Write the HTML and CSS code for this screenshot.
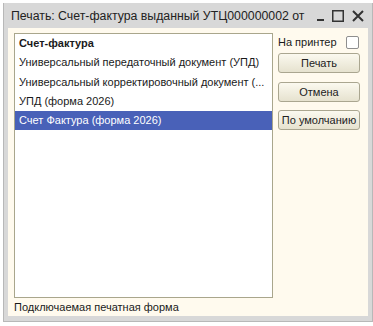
FILE: index.html
```html
<!DOCTYPE html>
<html lang="ru">
<head>
    <meta charset="UTF-8">
    <title>Печать</title>
    <link rel="stylesheet" href="styles.css">
</head>
<body>
    <div class="window">
        <div class="titlebar">
            <span class="title">Печать: Счет-фактура выданный УТЦ000000002 от</span>
            <span class="win-min"></span>
            <svg class="win-btn" width="12" height="12" viewBox="0 0 12 12"><rect x="0.75" y="0.75" width="10.5" height="10.5" fill="none" stroke="#333" stroke-width="1.5"/></svg>
            <svg class="win-btn" width="12" height="12" viewBox="0 0 12 12"><path d="M1 1 L11 11 M11 1 L1 11" stroke="#333" stroke-width="2"/></svg>
        </div>

        <div class="body">
            <div class="main">
                <!-- Список печатных форм -->
                <ul class="list">
                    <li class="bold">Счет-фактура</li>
                    <li>Универсальный передаточный документ (УПД)</li>
                    <li>Универсальный корректировочный документ (...</li>
                    <li>УПД (форма 2026)</li>
                    <li class="selected">Счет Фактура (форма 2026)</li>
                </ul>

                <div class="side">
                    <label class="printer">На принтер <span class="checkbox"></span></label>
                    <button type="button" class="btn">Печать</button>
                    <button type="button" class="btn">Отмена</button>
                    <button type="button" class="btn">По умолчанию</button>
                </div>
            </div>
            <div class="hint">Подключаемая печатная форма</div>
        </div>
    </div>
</body>
</html>
```

FILE: styles.css
```css
body {
    margin: 0;
    padding: 0;
    background-color: #ffffff;
    font-family: "Liberation Sans", Arial, sans-serif;
    font-size: 11px;
    color: #1a1a1a;
}
.window {
    width: 370px;
    height: 319px;
    margin: 3px 0 0 3px;
    background-color: #d8d8d8;
    border: 1px solid #b8b8b8;
    border-top: none;
    box-sizing: border-box;
    padding: 0 4px 5px 4px;
    display: flex;
    flex-direction: column;
}
.titlebar {
    height: 25px;
    display: flex;
    align-items: center;
    gap: 8px;
    padding: 0 4px 0 3px;
    color: #222;
}
.title {
    flex: 1;
    font-size: 12.3px;
    white-space: nowrap;
    overflow: hidden;
}
.win-min {
    width: 7px;
    height: 2px;
    margin-top: 9px;
    background-color: #333;
}
.body {
    flex: 1;
    background-color: #fffaee;
    padding: 5px 6px 0 6px;
    display: flex;
    flex-direction: column;
}
.main {
    display: flex;
    gap: 5px;
}
.list {
    width: 259px;
    height: 265px;
    margin: 0;
    padding: 0;
    list-style: none;
    background-color: #fff;
    border: 1px solid #a9a68c;
    box-sizing: border-box;
}
.list li {
    height: 19.3px;
    line-height: 19px;
    padding-left: 4px;
    white-space: nowrap;
    overflow: hidden;
}
.list .bold {
    font-weight: bold;
}
.list .selected {
    background-color: #4961b8;
    color: #ffffff;
}
.side {
    display: flex;
    flex-direction: column;
    width: 82px;
}
.printer {
    display: flex;
    justify-content: space-between;
    align-items: center;
    height: 14px;
    margin-top: 2px;
    margin-bottom: 4px;
    white-space: nowrap;
}
.checkbox {
    width: 11px;
    height: 11px;
    margin-right: 1px;
    border: 1px solid #8f8f8f;
    border-radius: 2px;
    background: #fff;
}
.btn {
    height: 20px;
    margin-bottom: 8.5px;
    padding: 0;
    font-family: inherit;
    font-size: 11px;
    white-space: nowrap;
    color: #222;
    background: linear-gradient(#fbf9ef, #e6e2cf);
    border: 1px solid #aaa690;
    border-radius: 3px;
}
.hint {
    margin-top: 3px;
}
```
